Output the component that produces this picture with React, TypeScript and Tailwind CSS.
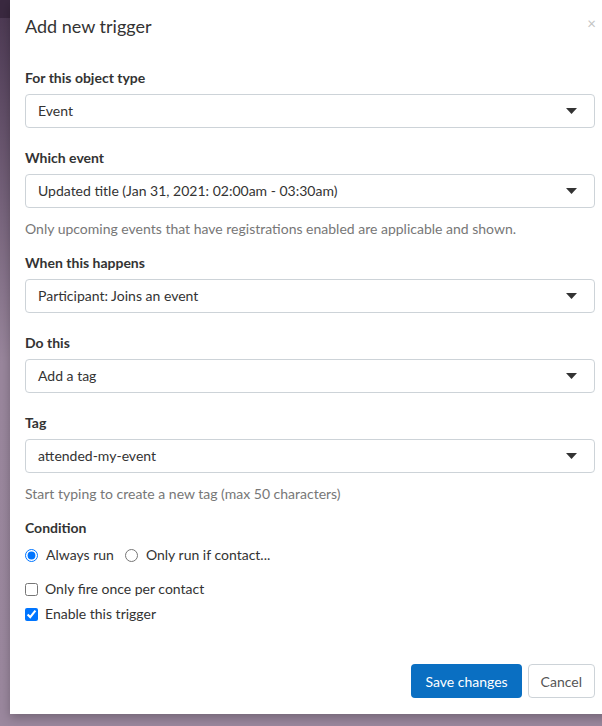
import React from "react";

function Caret() {
  return (
    <svg width="11" height="6" viewBox="0 0 11 6" className="shrink-0">
      <path d="M0 0 L11 0 L5.5 6 Z" fill="#333" />
    </svg>
  );
}

function Select({ value }: { value: string }) {
  return (
    <div className="flex h-[34px] items-center justify-between rounded-[4px] border border-[#cdd3d8] bg-white pl-[12px] pr-[17px] text-[14px] leading-[16px] text-[#333]">
      <span>{value}</span>
      <Caret />
    </div>
  );
}

function Label({ children }: { children: React.ReactNode }) {
  return <div className="mb-[8px] text-[14px] font-bold leading-[16px] text-[#333]">{children}</div>;
}

function Help({ children }: { children: React.ReactNode }) {
  return <div className="mt-[13px] text-[14px] leading-[16px] text-[#777]">{children}</div>;
}

export default function App() {
  return (
    <div
      className="relative h-[726px] w-[602px] overflow-hidden bg-gradient-to-b from-[#4a3751] via-[#9a879d] to-[#9b889e]"
      style={{ fontFamily: "Lato, 'Liberation Sans', sans-serif" }}
    >
      <div className="absolute left-0 top-0 h-[18px] w-full bg-[#3a2940]" />
      <div className="relative ml-[10px] flex h-[714px] w-[600px] flex-col bg-white pl-[15px] pr-[15px] shadow-[0_4px_10px_rgba(0,0,0,0.25)]">
        <div className="flex h-[53px] items-center justify-between">
          <div className="text-[18px] text-[#333]">Add new trigger</div>
          <div className="mr-[-1px] mt-[-7px] text-[15px] leading-none text-[#c4c4c4]">×</div>
        </div>
        <div className="mt-[17px]">
          <Label>For this object type</Label>
          <Select value="Event" />
        </div>
        <div className="mt-[22px]">
          <Label>Which event</Label>
          <Select value="Updated title (Jan 31, 2021: 02:00am - 03:30am)" />
          <Help>Only upcoming events that have registrations enabled are applicable and shown.</Help>
        </div>
        <div className="mt-[18px]">
          <Label>When this happens</Label>
          <Select value="Participant: Joins an event" />
        </div>
        <div className="mt-[22px]">
          <Label>Do this</Label>
          <Select value="Add a tag" />
        </div>
        <div className="mt-[22px]">
          <Label>Tag</Label>
          <Select value="attended-my-event" />
          <Help>Start typing to create a new tag (max 50 characters)</Help>
        </div>
        <div className="mt-[18px]">
          <div className="text-[14px] font-bold leading-[16px] text-[#333]">Condition</div>
          <div className="mt-[11px] flex h-[16px] items-center text-[14px] leading-[16px] text-[#333]">
            <input type="radio" defaultChecked name="c" className="m-0 h-[13px] w-[13px]" />
            <span className="ml-[8px]">Always run</span>
            <input type="radio" name="c" className="m-0 ml-[11px] h-[13px] w-[13px]" />
            <span className="ml-[8px]">Only run if contact...</span>
          </div>
        </div>
        <div className="mt-[18px] flex flex-col gap-[9px] text-[14px] leading-[16px] text-[#333]">
          <label className="flex h-[16px] items-center">
            <input type="checkbox" className="m-0 h-[13px] w-[13px]" />
            <span className="ml-[7px]">Only fire once per contact</span>
          </label>
          <label className="flex h-[16px] items-center">
            <input type="checkbox" defaultChecked className="m-0 h-[13px] w-[13px]" />
            <span className="ml-[7px]">Enable this trigger</span>
          </label>
        </div>
        <div className="mt-auto mb-[16px] flex justify-end gap-[6px]">
          <div className="flex h-[34px] items-center rounded-[4px] bg-[#0a6fc2] px-[14px] text-[14px] text-white">
            Save changes
          </div>
          <div className="flex h-[34px] items-center rounded-[4px] border border-[#cdd3d8] bg-white px-[12px] text-[14px] text-[#555]">
            Cancel
          </div>
        </div>
      </div>
    </div>
  );
}
